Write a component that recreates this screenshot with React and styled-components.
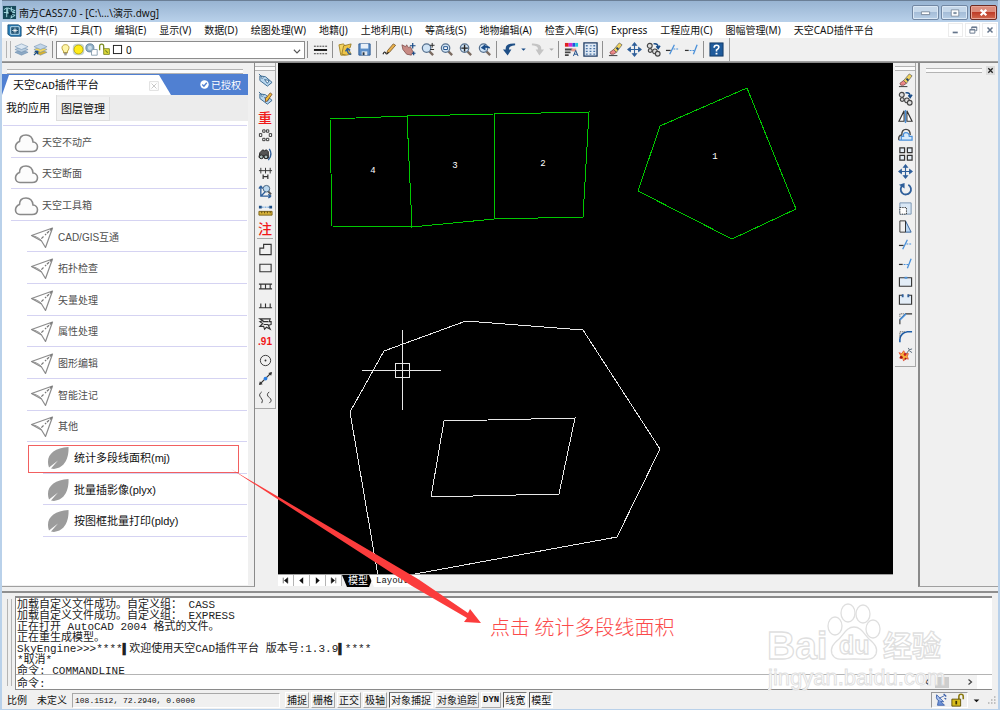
import React from "react";
import styled, { createGlobalStyle, css } from "styled-components";

const Global = createGlobalStyle`
  *, *::before, *::after { box-sizing: border-box; }
  body {
    margin: 0;
    background: #f0f0f0;
    color: #111;
    font: 10px/14px "Noto Sans", "Noto Sans CJK SC", sans-serif;
  }
  button, input, select { font: inherit; color: inherit; margin: 0; padding: 0; border: 0; background: none; }
`;

/* ---------- window frame ---------- */

const Window = styled.div`
  position: relative;
  display: flex;
  flex-direction: column;
  min-height: 100vh;
  min-width: 960px;
  overflow: hidden;
  border: solid #b9d1ea;
  border-width: 0 2px 2px;
  background: #f0f0f0;
`;

const TitleBar = styled.header`
  display: flex;
  align-items: center;
  gap: 2px;
  height: 22px;
  padding: 2px 1px 0 0;
  border-top: 1px solid #6b7f96;
  background: linear-gradient(#98b4d2, #b9d1ea);
`;

const Title = styled.h1`
  flex: 1;
  margin: 0;
  font-size: 10px;
  font-weight: 400;
`;

const WindowButton = styled.button`
  display: flex;
  align-items: center;
  justify-content: center;
  width: 27px;
  height: 15px;
  border: 1px solid #7187a3;
  border-radius: 2px;
  box-shadow: inset 0 0 0 1px #dbe8f5;
  background: linear-gradient(#c6d8ea 45%, #a5bdd8 50%, #b8cfe6);
  ${(p) => p.$close && css`
    border-color: #6e2a22;
    box-shadow: inset 0 0 0 1px #e8a597;
    background: linear-gradient(#dc8c7c 45%, #bf3d29 50%, #d26a50);
  `}
`;

const MenuBar = styled.nav`
  display: flex;
  align-items: center;
  height: 16px;
  padding-left: 5px;
  background: #fff;
`;

const MenuItems = styled.div`
  display: flex;
  flex: 1;
  gap: 13px;
  padding-left: 4px;
`;

const MenuItem = styled.button`
  line-height: 14px;
  white-space: nowrap;
`;

const ChildControls = styled.div`
  display: flex;
  gap: 2px;
  padding-right: 1px;
`;

const ChildButton = styled.button`
  display: flex;
  align-items: center;
  justify-content: center;
  width: 15px;
  height: 14px;
  border: 1px solid #ececec;
`;

/* ---------- top tool bar ---------- */

const ToolRow = styled.div`
  display: flex;
  height: 24px;
  border-bottom: 1px solid #a0a0a0;
`;

const ToolBar = styled.div`
  display: flex;
  align-items: center;
  padding: 0 3px 0 4px;
  border-right: 1px solid #a0a0a0;
`;

const GripV = styled.i`
  width: 5px;
  align-self: stretch;
  margin: 3px 1px 3px 0;
  border: solid #b4b4b4;
  border-width: 0 1px;
`;

const GripH = styled.i`
  display: block;
  height: 5px;
  border: solid #b4b4b4;
  border-width: 1px 0;
  background: #fbfbfb;
`;

const Divider = styled.i`
  width: 1px;
  height: 17px;
  margin: 0 3px 0 2px;
  background: #8f8f8f;
`;

const ToolButton = styled.button`
  display: flex;
  align-items: center;
  justify-content: center;
  width: ${(p) => (p.$narrow ? 9 : 19)}px;
  height: 18px;
`;

const LayerBox = styled.div`
  position: relative;
  display: flex;
  align-items: center;
  width: 249px;
  height: 18px;
  padding-left: 2px;
  border: 1px solid #8c8c8c;
  background: #fff;
`;

const LayerSelect = styled.select`
  flex: 1;
  height: 16px;
  appearance: none;
  padding-left: 2px;
  outline: none;
`;

const SelectArrow = styled.span`
  position: absolute;
  right: 2px;
  top: 4px;
  display: flex;
  pointer-events: none;
`;

/* ---------- work area ---------- */

const WorkArea = styled.main`
  display: flex;
  flex: 1;
  min-height: 524px;
  border-top: 1px solid #8a8a8a;
`;

const SidePanel = styled.aside`
  display: flex;
  flex-direction: column;
  width: 253px;
  padding: 6px 6px 1px 0;
  border-right: 1px solid #8a8a8a;
  border-bottom: 1px solid #a0a0a0;
  & > ${GripH} { margin: 0 5px; }
`;

const PanelHeader = styled.div`
  display: flex;
  justify-content: space-between;
  align-items: center;
  height: 21px;
  padding-right: 7px;
  background: #5080d2;
  color: #fff;
`;

const PanelTab = styled.div`
  display: flex;
  align-items: center;
  justify-content: space-between;
  width: 169px;
  height: 20px;
  align-self: flex-end;
  padding: 1px 12px 0 11px;
  clip-path: polygon(0 100%, 7px 0, 157px 0, 100% 100%);
  background: #fff;
  color: #111;
  font: 11px/18px "Liberation Mono", "Noto Sans CJK SC", monospace;
`;

const Licence = styled.span`
  display: flex;
  align-items: center;
  gap: 2px;
`;

const SubTabs = styled.div`
  display: flex;
  align-items: flex-start;
  height: 26px;
  background: #ececec;
`;

const SubTab = styled.button`
  height: 24px;
  margin-top: 2px;
  padding: 0 4px;
  font-size: 11px;
  border: solid #ddd;
  border-width: 0 1px 1px 0;
  background: #f2f2f2;
  ${(p) => p.$active && css`
    height: 26px;
    margin-top: 0;
    padding: 0 6px 1px 4px;
    border-bottom: 0;
    background: #fff;
  `}
`;

const PanelBody = styled.div`
  flex: 1;
  padding: 4px 1px 0 1px;
  background: #fff;
`;

const Tree = styled.ul`
  display: grid;
  grid-template-rows: repeat(13, 1fr);
  height: 412px;
  margin: 0;
  padding: 0;
  list-style: none;
  border-top: 1px solid #d5d3f2;
`;

const indents = [8, 24, 40];

const TreeRow = styled.li`
  position: relative;
  display: flex;
  margin-left: ${(p) => indents[p.$level]}px;
  border-bottom: 1px solid #d5d3f2;
  ${(p) => p.$marked && css`
    &::after {
      content: "";
      position: absolute;
      inset: 3px 8px 0 -15px;
      border: 1px solid #f26060;
    }
  `}
`;

const TreeButton = styled.button`
  display: flex;
  align-items: center;
  flex: 1;
  gap: 3px;
  padding: 3px 0 0 3px;
  color: #505050;
  font-family: "Liberation Sans", "Noto Sans CJK SC", sans-serif;
  ${(p) => p.$level === 1 && css`gap: 4px;`}
  ${(p) => p.$level === 2 && css`padding-top: 1px; color: #111; font-size: 11px; gap: 4px;`}
`;

const SideTools = styled.div`
  display: flex;
  flex-direction: column;
  width: 21px;
  margin: 0 2px;
  align-self: flex-start;
  padding: 3px 0 2px;
  border: solid #a8a8a8;
  border-width: 0 1px 1px 0;
  ${(p) => p.$left && css`margin-left: 0;`}
`;

const ToolGroup = styled.div`
  display: flex;
  flex-direction: column;
  align-items: center;
  justify-content: space-between;
  height: ${(p) => p.$height}px;
`;

const ToolRule = styled.i`
  height: 1px;
  margin: 1px 2px;
  background: #a8a8a8;
`;

const RedGlyph = styled.span`
  color: #f01818;
  font: 500 14px/14px "Noto Sans CJK SC", sans-serif;
  ${(p) => p.$small && css`font: 700 10px/16px "Liberation Sans", sans-serif;`}
`;

const Drawing = styled.section`
  display: flex;
  flex-direction: column;
  flex: 1;
  min-width: 0;
`;

const Canvas = styled.div`
  flex: 1;
  overflow: hidden;
  background: #000;
  & svg { display: block; }
`;

const SheetBar = styled.div`
  display: flex;
  height: 13px;
  border-top: 1px solid #a0a0a0;
`;

const SheetNav = styled.button`
  display: flex;
  align-items: center;
  justify-content: center;
  width: 16px;
  height: 11px;
  border-right: 1px solid #b5b5b5;
  background: #fff;
`;

const SheetTab = styled.button`
  height: 12px;
  margin-right: -5px;
  padding: 0 7px;
  clip-path: polygon(0 0, 100% 0, calc(100% - 5px) 100%, 5px 100%);
  background: #fff;
  font: 9px/11px "Liberation Mono", "Noto Sans CJK SC", monospace;
  ${(p) => p.$active && css`
    padding: 0 6px;
    background: #000;
    color: #fff;
    font-size: 10px;
  `}
`;

const Dock = styled.aside`
  width: 80px;
  padding: 3px 3px 0 6px;
  border-left: 2px solid #8a8a8a;
  border-bottom: 1px solid #a0a0a0;
`;

const DockHead = styled.div`
  display: flex;
  align-items: center;
  gap: 4px;
  & > ${GripH} { flex: 1; }
`;

const DockClose = styled.button`
  display: flex;
  align-items: center;
  justify-content: center;
  width: 9px;
  height: 9px;
  background: #ddd;
`;

/* ---------- command window and status bar ---------- */

const CommandArea = styled.section`
  display: flex;
  margin-top: 4px;
  padding: 3px 6px 0 4px;
  border-top: 2px solid #8f8f8f;
`;

const CommandGrip = styled(GripV)`
  margin: 3px 3px 4px 1px;
`;

const CommandBox = styled.div`
  flex: 1;
  min-width: 0;
  border: solid #8a8a8a;
  border-width: 2px 0 1px 1px;
  background: #fff;
  color: #222;
  font: 11px/11px "Noto Sans CJK SC", sans-serif;
`;

const History = styled.div`
  height: 77px;
  border-bottom: 1px solid #b4b4b4;
`;

const Line = styled.p`
  height: 11px;
  margin: 0;
  padding-left: 1px;
  white-space: pre;
  &:last-child { height: 10px; }
`;

const Latin = styled.span`
  font: 11px/1px "Liberation Mono", monospace;
`;

const Prompt = styled.label`
  display: flex;
  align-items: center;
  height: 14px;
  padding-left: 1px;
`;

const PromptInput = styled.input`
  flex: 1;
  height: 12px;
  outline: none;
`;

const Scroller = styled.div`
  display: flex;
  align-items: center;
  justify-content: space-between;
  align-self: stretch;
  width: 57px;
  margin-right: 15px;
  padding: 0 3px;
  background: #f3f3f3;
`;

const Thumb = styled.i`
  width: 14px;
  height: 11px;
  margin-right: 14px;
  background: #cdcdcd;
`;

const StatusBar = styled.footer`
  display: flex;
  align-items: center;
  height: 19px;
  padding: 1px 1px 0 5px;
`;

const ScaleInfo = styled.span`
  display: flex;
  gap: 10px;
  margin-right: 5px;
  font-family: "Noto Sans CJK SC", sans-serif;
`;

const Coordinates = styled.output`
  width: 208px;
  height: 15px;
  margin-right: 5px;
  padding-left: 2px;
  border: 1px solid;
  border-color: #a8a8a8 #fff #fff #a8a8a8;
  font: 8px/14px "Liberation Mono", monospace;
`;

const Toggles = styled.div`
  display: flex;
  flex: 1;
  gap: 2px;
`;

const Toggle = styled.button`
  height: 16px;
  padding: 0 1px;
  border: 1px solid;
  border-color: #fff #a8a8a8 #a8a8a8 #fff;
  white-space: nowrap;
  font: 10px/14px "Noto Sans CJK SC", sans-serif;
  ${(p) => p.$on && css`border-color: #777 #fff #fff #555; background: #f7f7f7;`}
  ${(p) => p.$mono && css`font: 700 9px/14px "Liberation Mono", monospace;`}
`;

const Tray = styled.div`
  display: flex;
  align-items: center;
  gap: 3px;
  height: 16px;
  padding: 0 2px;
  border: 1px solid;
  border-color: #999 #fff #fff #999;
`;

const TrayEnd = styled.div`
  display: flex;
  align-items: center;
  gap: 4px;
  padding-left: 4px;
`;

/* ---------- overlays ---------- */

const Arrow = styled.svg`
  position: absolute;
  left: 226px;
  top: 467px;
  pointer-events: none;
`;

const Note = styled.p`
  position: absolute;
  left: 488px;
  top: 615px;
  margin: 0;
  color: #fb4a4a;
  font: 300 20px/24px "Noto Sans CJK SC", sans-serif;
  white-space: pre;
`;

const Watermark = styled.svg`
  position: absolute;
  right: 52px;
  bottom: 14px;
  pointer-events: none;
`;

/* ---------- icons ---------- */

const K = "#333";
const B = "#2f5f9a";
const L = "#4a90d9";

const stack = (y, fill) => <path d={`M1 ${y}l7-3 7 3-7 3z`} fill={fill} stroke="#6d8fb0" strokeWidth=".6" />;
const lens = (inner) => (
  <>
    <path d="M10 10l4 4" stroke="#7a6a60" strokeWidth="2.4" />
    <circle cx="7" cy="6.500" r="4.500" fill="#cfe3f5" stroke="#55708f" strokeWidth="1.300" />
    {inner}
  </>
);
const eraser = (
  <>
    <path d="M2 11l4-3 3 3-3 2H3z" fill="#e88" stroke="#633" strokeWidth=".7" />
    <path d="M6 8l6-7 3 2-6 8z" fill="#f2d35a" stroke="#555" strokeWidth=".7" />
    <path d="M9 6l2 2" stroke="#246" strokeWidth="2" />
    <path d="M1 14.500h9" stroke={K} />
  </>
);
const move = <path d="M8 2v12M2 8h12M8 1L6 3.500h4zM8 15l-2-2.500h4zM1 8l2.500-2v4zM15 8l-2.500-2v4z" stroke={B} fill={B} strokeWidth="1.200" />;
const copy = (
  <>
    <g fill="#ddd" stroke="#444" strokeWidth="1.200"><circle cx="4" cy="4" r="2.600" /><circle cx="4.500" cy="9" r="2" /><circle cx="9.500" cy="10" r="2.500" /><circle cx="12.500" cy="12.500" r="2.500" /></g>
    <path d="M8 2q5-1 5 4m-2-1.500l2 2.500 2-3" stroke="#174a86" fill="none" strokeWidth="1.500" />
  </>
);
const trim = (
  <>
    <path d="M1 9h5" stroke={K} strokeWidth="1.300" /><path d="M5 13l5-10" stroke={L} strokeWidth="1.400" /><path d="M9 7.500h6" stroke={L} strokeWidth="1.200" strokeDasharray="2 1" />
  </>
);
const extend = (
  <>
    <path d="M1 9h4" stroke={K} strokeWidth="1.300" /><path d="M6 9h5" stroke={L} strokeWidth="1.200" strokeDasharray="2 1" /><path d="M10 13l4-10" stroke={L} strokeWidth="1.400" />
  </>
);
const tag = (
  <>
    <path d="M2 3l6 1 7 6-5 4-8-6z" fill="#b9d7ef" stroke="#37688f" /><circle cx="4.500" cy="5" r="1" fill="#fff" stroke="#37688f" strokeWidth=".7" />
    <path d="M1 1l3 3M7 7l3 4 2-3z" stroke="#37688f" fill="#fff" />
  </>
);

const shapes = {
  app: <><rect x="1" y="1" width="14" height="14" fill="#174a5b" /><path d="M2 5l3-2v10M6 3l8 3-8 3zM7 9l7 2-5 3M10 2v12M2 8h12" stroke="#a8dde4" fill="none" /><path d="M7 7h4v4H7z" fill="#0b2d3b" /></>,
  doc: <><path d="M1 2h11l3 2v10H4l-3-2z" fill="#2a82bd" stroke="#174e78" /><path d="M4 4h9v8H4z" fill="#0d4468" stroke="#cfeaf8" /><path d="M8.500 5v6M5.500 8h6M6.500 6l4 4M10.500 6l-4 4" stroke="#fff" strokeWidth=".8" /></>,
  layers: <>{stack(11, "#8da9c4")}{stack(8, "#b7cbdd")}{stack(5, "#dbe7f2")}</>,
  layerSet: <>{stack(11, "#d9b12d")}{stack(8, "#f3d75e")}{stack(5, "#c3d6e8")}<path d="M1 14l4-4m-3 0h3v3" stroke="#174a86" fill="none" strokeWidth="1.400" /></>,
  bulb: <><path d="M5.500 10C2 6 4 2 8 2s6 4 2.500 8v2h-5z" fill="#fff6a8" stroke="#a98b1a" /><path d="M6 12.500h4M6.500 14.500h3" stroke="#555" /></>,
  sun: <><rect x="1" y="1" width="14" height="14" rx="5" fill="#9cb5b0" opacity=".6" /><circle cx="8" cy="8" r="5.500" fill="#ffec1a" stroke="#b8a200" /></>,
  freeze: <><circle cx="6" cy="6" r="5" fill="#93b2c8" stroke="#5c7d96" /><circle cx="6" cy="6" r="2.500" fill="#c9dce8" /><path d="M9 8h6v7H8v-4z" fill="#fff" stroke="#7d95a8" /></>,
  unlock: <><path d="M2 9V4q0-2.500 2.500-2.500T7 4v4" fill="none" stroke="#7a8b22" strokeWidth="1.600" /><path d="M7 7h7v7H7z" fill="#e2dc3a" stroke="#6f7a1a" /><path d="M9 9l3 3" stroke="#7a8b22" strokeWidth="1.500" /></>,
  swatch: <rect x="3" y="3" width="10" height="10" fill="#fff" stroke="#222" strokeWidth="1.200" />,
  linetype: <><path d="M1 4.500h14M1 12.500h14" stroke={K} strokeDasharray="2 1" /><path d="M1 8.500h14" stroke="#111" strokeWidth="2" /></>,
  open: <><path d="M1 3l5-1 1 2h4l-3 10H3z" fill="#f3d463" stroke="#a8882a" /><path d="M6 4l8-2-1 4-2 1 3 6-5 1-5-1z" fill="#efc548" stroke="#8a6d1c" strokeWidth=".8" /><path d="M14 13q-4 0-4-5m-2 2l2-3 3 2" stroke={B} fill="none" strokeWidth="1.500" /></>,
  save: <><path d="M2 2h12v12H2z" fill="#5c8fc9" stroke="#2c5a90" /><path d="M4 2h8v5H4z" fill="#e8f0f8" /><path d="M5 10h6v4H5z" fill="#dfe6ee" /><path d="M6 11h2v3H6z" fill="#234" /></>,
  pencil: <><path d="M5 12l1-3 6-7 2.500 1.500L8 11z" fill="#e8b04a" stroke="#6e4b1c" strokeWidth=".8" /><path d="M1 13q2-4 3-1 1 2 3-1" stroke="#222" fill="none" strokeWidth="1.200" /></>,
  hand: <><path d="M1 3l4 2 1-2 2 3 2-1 3 6-2 3-5-1-4-5z" fill="#c78a84" stroke="#7c4b48" strokeWidth=".8" /><path d="M12.500 1v6M9.500 4h6M11.500 12h4M13.500 10v4" stroke="#174a86" strokeWidth="1.300" /></>,
  zoomPlus: <>{lens()}<path d="M13 1v5M10.500 3.500h5M11 8h4" stroke="#222" /></>,
  zoomWindow: lens(<path d="M5 5h4v3H5z" fill="#fff" stroke="#174a86" />),
  zoomExtents: lens(<path d="M7 3v7M3.500 6.500h7" stroke="#222" strokeWidth="1.500" />),
  zoomBack: <>{lens()}<path d="M4 6l5-4v2q5 0 5 3-2-1-5-1v3z" fill="#174a86" /></>,
  undo: <path d="M14 1.500Q3 1 4 8L1 8l5 6.500L10 8H7.500Q7 4 14 3.500z" fill="#1f4f86" />,
  redo: <path d="M2 1.500Q13 1 12 8l3 0-5 6.500L6 8h2.500Q9 4 2 3.500z" fill="#c4c4c4" />,
  palette: <><path d="M1 1h4v4H1z" fill="#e02020" /><path d="M5 1h4v4H5z" fill="#d030d0" /><path d="M9 1h3v4H9z" fill="#2050e0" /><path d="M12 1h3v4h-3z" fill="#20c8d8" /><path d="M1 7h8v2H1zM1 10h6v2H1zM1 13h4v2H1z" fill="#444" /><path d="M8 7h5v3H8z" fill="#e79a8c" /><path d="M10 15l2.500-6 2.500 6M11 13h3" stroke="#174a86" fill="none" /></>,
  properties: <><path d="M1 1h14v14H1z" fill="#dfe9f4" stroke="#223f66" strokeWidth="1.400" /><path d="M3 4h2M3 7h2M3 10h2M3 13h2M8 4h1M11 4h2M7 7h2M11 7h2M7 10h2M11 10h2M7 13h2M11 13h2" stroke="#4a76a8" strokeWidth="1.400" /></>,
  help: <><rect x="1" y="1" width="14" height="14" fill="#1f5b9c" stroke="#143a66" /><path d="M5.500 6q0-2.500 2.500-2.500t2.500 2q0 1.500-2.500 3v1.500" fill="none" stroke="#fff" strokeWidth="1.700" /><path d="M7 11.500h2v1.800H7z" fill="#fff" /></>,
  caret: <path d="M4 6h8l-4 4z" fill="#174a86" />,
  caretGray: <path d="M4 6h8l-4 4z" fill="#aaa" />,
  eraser, move, copy, trim, extend, tag,
  tagEdit: <>{tag}<path d="M8 8l5-6 2 1.500-5 7-2 1z" fill="#f0bb3c" stroke="#6e3c1c" strokeWidth=".8" /></>,
  squares: <path d="M5 2h2.500v2.500H5zM9 2h2.500v2.500H9zM1.500 6H4v3H1.500zM12 6h2.500v3H12zM5 11h2.500v2.500H5zM9 11h2.500v2.500H9z" fill="#fff" stroke={K} />,
  binoculars: <><path d="M1 11l1-5 3-3 2 1 2-1 2 2v7H7l-1-3-1 3z" fill="#555" stroke="#222" /><circle cx="3.500" cy="10.500" r="2" fill="#abb" stroke="#222" /><circle cx="8.500" cy="10.500" r="2" fill="#abb" stroke="#222" /><path d="M12 2q4 6-1 12" fill="none" stroke="#2f5f9a" strokeWidth="1.500" /></>,
  spacing: <><path d="M1 6h14M3 3v6M8 3v6M13 3v6" stroke={K} /><path d="M5.500 10v5M10.500 10v5M5.500 12.500h5" stroke={K} strokeWidth="1.300" /></>,
  axisZoom: <><path d="M3 2v11h11M3 2L1 5m2-3l2 3M14 13l-3-2m3 2l-3 2M3 13l5-5" stroke={B} fill="none" strokeWidth="1.400" /><circle cx="9" cy="5" r="3.500" fill="#b9d7ef" stroke="#44617e" /><path d="M11 8l3 3" stroke="#555" strokeWidth="2" /></>,
  ruler: <><path d="M1 5.500h14" stroke={L} strokeDasharray="2 1" /><path d="M1 4h3v3H1zM12 4h3v3h-3z" fill="#1f4f86" /><path d="M1 10h14v4H1z" fill="#d8b238" stroke="#7a6118" /><path d="M4 10v2M7 10v2M10 10v2M13 10v2" stroke="#5d4810" /></>,
  building: <path d="M2 13.500v-7h4v-4h8v11z" fill="none" stroke={K} strokeWidth="1.200" />,
  rect: <path d="M2 4.500h12v8H2z" fill="none" stroke={K} strokeWidth="1.200" />,
  ladder: <path d="M1 5.500h14M1 10.500h14M3 5v6M8 5v6M13 5v6" stroke={K} strokeWidth="1.200" />,
  comb: <path d="M1 11.500h14M3 7v4M8 7v4M13 7v4" stroke={K} strokeWidth="1.200" />,
  bush: <path d="M2 3h11l-1 3h2v3l-3 1 2 4-4-2-2 2-1-3H2l3-3-3-2 3-1zM5 6h6M6 9h5" fill="none" stroke={K} strokeWidth="1.200" />,
  target: <><circle cx="8" cy="8" r="5.500" fill="none" stroke={K} /><circle cx="8" cy="8" r="1" fill={K} /></>,
  link: <><path d="M2 14L14 2" stroke={K} strokeWidth="1.300" /><path d="M1 15l1-4 3 3zM15 1l-4 1 3 3z" fill={K} /><circle cx="8" cy="8" r="2" fill="#2a7de1" /></>,
  waves: <path d="M4 2q-4 3-1 6t1 6M12 2q-4 3 0 6t0 6" fill="none" stroke={K} />,
  mirror: <><path d="M6.500 2v11H1zM9.500 2v11H15z" fill="#fff" stroke={K} strokeWidth="1.200" /><path d="M8 1v14" stroke={L} strokeWidth="1.500" /></>,
  offset: <><path d="M1 14q-1-5 3-5.500 0-6 4.500-6T13 8.500" fill="none" stroke="#444" strokeWidth="1.500" /><path d="M1 14h14v-4h-3q0-4-3.500-4T6 10H3.500v4" fill="#d7eafa" stroke={L} strokeWidth="1.300" /></>,
  array: <path d="M2 2h5v5H2zM10 2h5v5h-5zM2 10h5v5H2zM10 10h5v5h-5z" fill="#e5eef7" stroke={K} strokeWidth="1.300" />,
  rotate: <><path d="M5 3.500A5.500 5.500 0 1 0 11 3" fill="none" stroke={B} strokeWidth="1.900" /><path d="M1 3l6-2v6z" fill={B} /></>,
  scale: <><path d="M2 2h12v12H2z" fill="#d9e7f5" stroke="#7592b0" /><path d="M2 7h7v7H2z" fill="#fff" stroke={K} strokeDasharray="1.500 1" /></>,
  stretch: <><path d="M8 2l6 12H8z" fill="#bcd7f1" stroke="#2f5f9a" /><path d="M2 2h6v12H2z" fill="none" stroke={K} /></>,
  breakPoint: <><path d="M1.500 4h13v9h-13z" fill="#e3edf7" stroke={K} strokeWidth="1.200" /><path d="M7 3h3v2H7z" fill={L} /></>,
  breakGap: <><path d="M5 3.500H1.500V13h13V3.500H11" fill="#e3edf7" stroke={K} strokeWidth="1.200" /><path d="M4 2.500h2v3H4zM10 2.500h2v3h-2z" fill={B} /></>,
  chamfer: <><path d="M2 14V9l6-6h7" fill="none" stroke={K} strokeWidth="1.200" /><path d="M2 9.500L8.500 3" stroke={L} strokeWidth="1.700" /><path d="M2 6V3h4" fill="none" stroke={K} strokeDasharray="1 1" /></>,
  fillet: <><path d="M2 14v-3Q3 4 10 3h5" fill="none" stroke="#1f5ea8" strokeWidth="1.700" /><path d="M2 9V3h6" fill="none" stroke={K} strokeDasharray="1 1" /></>,
  explode: <><path d="M1 6l3 1 2-3 2 3 3 0-1 3 1 3-3-1-2 3-1-3-3 0 1-3z" fill="#f6b23c" stroke="#d43" strokeWidth=".8" /><circle cx="3.500" cy="11" r="1.500" fill="#a11" /><circle cx="7.500" cy="8" r="1.500" fill="#c22" /><circle cx="8" cy="12.500" r="1" fill="#a11" /><path d="M9 7l3-4 3-1M12 3l-1-2M12 4l3 2" stroke="#567" fill="none" /></>,
  first: <path d="M4 3v10M12 3v10L6 8z" fill="#111" stroke="#111" />,
  prev: <path d="M11 2v12L4 8z" fill="#111" />,
  next: <path d="M5 2v12l7-6z" fill="#111" />,
  last: <path d="M12 3v10M4 3v10l6-5z" fill="#111" stroke="#111" />,
  chevronDown: <path d="M3 6l5 5 5-5" fill="none" stroke="#555" strokeWidth="1.700" />,
  chevronLeft: <path d="M11 3L5 8l6 5" fill="none" stroke="#444" strokeWidth="2.500" />,
  chevronRight: <path d="M5 3l6 5-6 5" fill="none" stroke="#444" strokeWidth="2.500" />,
  cross: <path d="M3 3l10 10M13 3L3 13" stroke="#222" strokeWidth="3" />,
  crossWhite: <path d="M3 3l10 10M13 3L3 13" stroke="#fff" strokeWidth="4" />,
  crossGray: <path d="M3 3l10 10M13 3L3 13" stroke="#64748a" strokeWidth="3" />,
  minimise: <path d="M2 7h12v4H2z" fill="#fff" stroke="#5a6a7d" />,
  maximise: <path d="M2 3h12v10H2zM6 7h4v2H6z" fill="#fff" fillRule="evenodd" stroke="#5a6a7d" />,
  childMin: <path d="M3 10h9v3H3z" fill="#64748a" />,
  childRestore: <path d="M6 3h8v6h-2M6 3v3M3 7h8v6H3zM3 8h8M6 4h8" fill="none" stroke="#64748a" strokeWidth="1.500" />,
  tabClose: <><path d="M1 1h14v14H1z" fill="none" stroke="#ccc" /><path d="M4 4l8 8M12 4l-8 8" stroke="#c4c4c4" strokeWidth="1.500" /></>,
  check: <><circle cx="8" cy="8" r="7.500" fill="#fff" /><path d="M4 8l3 3 5-6" fill="none" stroke="#5080d2" strokeWidth="2.500" /></>,
  satellite: <><path d="M3 2q-2 8 8 8z" fill="#a9c2ee" stroke="#3a5fa8" /><path d="M6 6l6-3M5 9l-1 5h8l-4-4" fill="#6d92d8" stroke="#3a5fa8" /><path d="M11 1l3 3M12 6l2 1" stroke="#3a5fa8" strokeWidth="1.500" /></>,
  padlock: <><path d="M9 7V4q0-2.500 2.500-2.500T14 4v3" fill="none" stroke="#8b7a10" strokeWidth="1.800" /><path d="M1 7h10v8H1z" fill="#d8bd1c" stroke="#5a4c05" /><path d="M6 9v4" stroke="#3c3300" strokeWidth="2" /></>,
  down: <path d="M3 6h10l-5 5z" fill="#111" />,
  resize: <path d="M12 3h2v2h-2zM8 7h2v2H8zM12 7h2v2h-2zM4 11h2v2H4zM8 11h2v2H8zM12 11h2v2h-2z" fill="#b0b0b0" />,
};

const Icon = ({ name, size = 15 }) => (
  <svg width={size} height={size} viewBox="0 0 16 16" fill="none" aria-hidden="true">{shapes[name]}</svg>
);

const CloudIcon = () => (
  <svg width="25" height="20" viewBox="0 0 25 20" aria-hidden="true">
    <path d="M6 18.500h12c3.500 0 5.500-2 5.500-4.700 0-2.600-2-4.600-4.500-4.800C18.500 4.500 16 2 12 2 8 2 5.500 4.500 5.500 8.500 3 9.500 1.500 11.500 1.500 14c0 2.700 2 4.500 4.500 4.500z" fill="#fcfcfc" stroke="#898989" strokeWidth="1.600" />
  </svg>
);

const PlaneIcon = () => (
  <svg width="24" height="22" viewBox="0 0 24 22" fill="none" stroke="#8b8b8b" aria-hidden="true">
    <path d="M1.500 8.500L22.500 1 15.500 20.500 11.500 14z" strokeWidth="1.200" strokeLinejoin="round" />
    <path d="M1.500 8.500Q9 10 11.500 14" />
    <path d="M22 1.500l-7 6.500M13.500 9.500l-3 3" stroke="#777" strokeWidth="1.200" strokeDasharray="3 1" />
  </svg>
);

const LeafIcon = () => (
  <svg width="24" height="24" viewBox="0 0 24 24" aria-hidden="true">
    <path d="M22.500 1C23 10 20 22 8 23L5 22.500l7-8-9 7C-1 10 7 2 22.500 1z" fill="#9c9c9c" />
  </svg>
);

/* ---------- data ---------- */

const menus = ["文件(F)", "工具(T)", "编辑(E)", "显示(V)", "数据(D)", "绘图处理(W)", "地籍(J)", "土地利用(L)", "等高线(S)", "地物编辑(A)", "检查入库(G)", "Express", "工程应用(C)", "图幅管理(M)", "天空CAD插件平台"];

const mainTools = ["linetype", "|", "open", "save", "|", "pencil", "hand", "zoomPlus", "zoomWindow", "zoomExtents", "zoomBack", "|", "undo", "caret", "redo", "caretGray", "|", "palette", "properties", "|", "eraser", "move", "copy", "trim", "extend", "|", "help"];

const tree = [
  [0, "天空不动产"], [0, "天空断面"], [0, "天空工具箱"],
  [1, "CAD/GIS互通"], [1, "拓扑检查"], [1, "矢量处理"], [1, "属性处理"], [1, "图形编辑"], [1, "智能注记"], [1, "其他"],
  [2, "统计多段线面积(mj)", true], [2, "批量插影像(plyx)"], [2, "按图框批量打印(pldy)"],
];
const levelIcons = [CloudIcon, PlaneIcon, LeafIcon];

const leftUpper = ["tag", "tagEdit", "重", "squares", "binoculars", "spacing", "axisZoom", "ruler", "注"];
const leftLower = ["building", "rect", "ladder", "comb", "bush", ".91", "target", "link", "waves"];
const rightTools = ["eraser", "copy", "mirror", "offset", "array", "move", "rotate", "scale", "stretch", "trim", "extend", "breakPoint", "breakGap", "chamfer", "fillet", "explode"];

const toggles = [["捕捉"], ["栅格"], ["正交"], ["极轴"], ["对象捕捉", true], ["对象追踪"], ["DYN"], ["线宽", true], ["模型", true]];

const SideButton = ({ name }) => (
  <ToolButton aria-label={name}>
    {shapes[name] ? <Icon name={name} /> : <RedGlyph $small={name === ".91"}>{name}</RedGlyph>}
  </ToolButton>
);

export default function App() {
  return (
    <Window>
      <Global />
      <TitleBar>
        <Icon name="app" />
        <Title>南方CASS7.0 - [C:\...\演示.dwg]</Title>
        <WindowButton aria-label="最小化"><Icon name="minimise" size={11} /></WindowButton>
        <WindowButton aria-label="最大化"><Icon name="maximise" size={10} /></WindowButton>
        <WindowButton $close aria-label="关闭"><Icon name="crossWhite" size={9} /></WindowButton>
      </TitleBar>
      <MenuBar>
        <Icon name="doc" size={15} />
        <MenuItems>{menus.map((m) => <MenuItem key={m}>{m}</MenuItem>)}</MenuItems>
        <ChildControls>
          <ChildButton aria-label="最小化图形"><Icon name="childMin" size={9} /></ChildButton>
          <ChildButton aria-label="还原图形"><Icon name="childRestore" size={10} /></ChildButton>
          <ChildButton aria-label="关闭图形"><Icon name="crossGray" size={8} /></ChildButton>
        </ChildControls>
      </MenuBar>
      <ToolRow>
        <ToolBar>
          <GripV />
          <ToolButton aria-label="图层"><Icon name="layers" /></ToolButton>
          <ToolButton aria-label="设为当前图层"><Icon name="layerSet" /></ToolButton>
          <Divider />
          <LayerBox>
            {["bulb", "sun", "freeze", "unlock", "swatch"].map((n) => <Icon key={n} name={n} size={13} />)}
            <LayerSelect aria-label="当前图层"><option>0</option></LayerSelect>
            <SelectArrow><Icon name="chevronDown" size={10} /></SelectArrow>
          </LayerBox>
          <Divider />
          {mainTools.map((t, i) => t === "|" ? <Divider key={i} /> : (
            <ToolButton key={i} aria-label={t} $narrow={t.startsWith("caret")}>
              <Icon name={t} size={t.startsWith("caret") ? 9 : 15} />
            </ToolButton>
          ))}
        </ToolBar>
      </ToolRow>
      <WorkArea>
        <SidePanel>
          <GripH />
          <PanelHeader>
            <PanelTab>天空CAD插件平台<Icon name="tabClose" size={10} /></PanelTab>
            <Licence><Icon name="check" size={9} />已授权</Licence>
          </PanelHeader>
          <SubTabs>
            <SubTab $active>我的应用</SubTab>
            <SubTab>图层管理</SubTab>
          </SubTabs>
          <PanelBody>
            <Tree>
              {tree.map(([level, label, marked]) => {
                const Glyph = levelIcons[level];
                return (
                  <TreeRow key={label} $level={level} $marked={marked}>
                    <TreeButton $level={level}><Glyph />{label}</TreeButton>
                  </TreeRow>
                );
              })}
            </Tree>
          </PanelBody>
        </SidePanel>
        <SideTools $left>
          <GripH />
          <ToolGroup $height={166}>{leftUpper.map((n) => <SideButton key={n} name={n} />)}</ToolGroup>
          <ToolRule />
          <ToolGroup $height={166}>{leftLower.map((n) => <SideButton key={n} name={n} />)}</ToolGroup>
        </SideTools>
        <Drawing>
          <Canvas>
            <svg width="615" height="511" viewBox="278 63 615 511" fill="none" shapeRendering="crispEdges">
              <g stroke="#00c800">
                <path d="M330 119L407 116 412 227 332 226z" />
                <path d="M407 116L494 114V219L412 227z" />
                <path d="M494 114L589 112 583 217 494 219" />
                <path d="M660 126L747 88 796 209 732 239 638 191z" />
              </g>
              <g stroke="#e8e8e8">
                <path d="M378 576L350 412 384 351 466 321 583 330 660 449 617 537 404 576" />
                <path d="M444 421L575 418 559 494 431 497z" />
                <path d="M362 370.500H441M402.500 330V410M395.500 363.500h14v14h-14z" />
              </g>
              <g fill="#fff" fontFamily="Liberation Mono, monospace" fontSize="9" textAnchor="middle">
                <text x="373" y="173">4</text>
                <text x="455" y="168">3</text>
                <text x="543" y="166">2</text>
                <text x="715" y="159">1</text>
              </g>
            </svg>
          </Canvas>
          <SheetBar>
            {["first", "prev", "next", "last"].map((n) => (
              <SheetNav key={n} aria-label={n}><Icon name={n} size={9} /></SheetNav>
            ))}
            <SheetTab $active>模型</SheetTab>
            <SheetTab>Layout1</SheetTab>
          </SheetBar>
        </Drawing>
        <SideTools>
          <GripH />
          <ToolGroup $height={293}>{rightTools.map((n) => <SideButton key={n} name={n} />)}</ToolGroup>
        </SideTools>
        <Dock>
          <DockHead>
            <GripH />
            <DockClose aria-label="关闭面板"><Icon name="cross" size={7} /></DockClose>
          </DockHead>
        </Dock>
      </WorkArea>
      <CommandArea>
        <CommandGrip />
        <CommandBox>
          <History>
            <Line>加载自定义文件成功。自定义组：<Latin> CASS</Latin></Line>
            <Line>加载自定义文件成功。自定义组：<Latin> EXPRESS</Latin></Line>
            <Line>正在打开<Latin> AutoCAD 2004 </Latin>格式的文件。</Line>
            <Line>正在重生成模型。</Line>
            <Line><Latin>SkyEngine&gt;&gt;&gt;****▌</Latin>欢迎使用天空<Latin>CAD</Latin>插件平台<Latin> </Latin>版本号<Latin>:1.3.9▌****</Latin></Line>
            <Line><Latin>*</Latin>取消<Latin>*</Latin></Line>
            <Line>命令<Latin>: COMMANDLINE</Latin></Line>
          </History>
          <Prompt>
            <span>命令<Latin>:</Latin></span>
            <PromptInput />
            <Scroller>
              <Icon name="chevronLeft" size={8} />
              <Thumb />
              <Icon name="chevronRight" size={8} />
            </Scroller>
          </Prompt>
        </CommandBox>
      </CommandArea>
      <StatusBar>
        <ScaleInfo><span>比例</span><span>未定义</span></ScaleInfo>
        <Coordinates>108.1512, 72.2940, 0.0000</Coordinates>
        <Toggles>
          {toggles.map(([label, on]) => (
            <Toggle key={label} $on={on} $mono={label === "DYN"} aria-pressed={!!on}>{label}</Toggle>
          ))}
        </Toggles>
        <Tray><Icon name="satellite" size={14} /><Icon name="padlock" size={14} /></Tray>
        <TrayEnd><Icon name="down" size={9} /><Icon name="resize" size={12} /></TrayEnd>
      </StatusBar>

      <Watermark width="178" height="94" viewBox="0 0 178 94" fill="#fff" stroke="#dfdfdf" strokeWidth="1.300" fontFamily="Liberation Sans, Noto Sans CJK SC, sans-serif">
        <text x="-1" y="58" fontSize="39" fontWeight="700">Bai</text>
        <ellipse cx="67" cy="25" rx="7" ry="9" />
        <ellipse cx="80" cy="12" rx="7" ry="9" />
        <ellipse cx="95" cy="13" rx="7" ry="9" />
        <ellipse cx="105" cy="28" rx="7" ry="9" />
        <path d="M86 26c-7 0-10 7-15 12-6 5-9 9-7 15 3 7 10 5 22 5s19 2 22-5c2-6-1-10-7-15-5-5-8-12-15-12z" />
        <text x="71" y="53" fontSize="25" fontWeight="700">du</text>
        <text x="115" y="56" fontSize="29" fontWeight="700">经验</text>
        <text x="0" y="84" fontSize="22" strokeWidth="1">jingyan.baidu.com</text>
      </Watermark>
      <Arrow width="260" height="162" viewBox="228 468 260 162">
        <path d="M231 470L418 580 468 614 470 610 481 624 464 623 467 619 412 587z" fill="#fb3c3c" />
      </Arrow>
      <Note>点击 统计多段线面积</Note>
    </Window>
  );
}
